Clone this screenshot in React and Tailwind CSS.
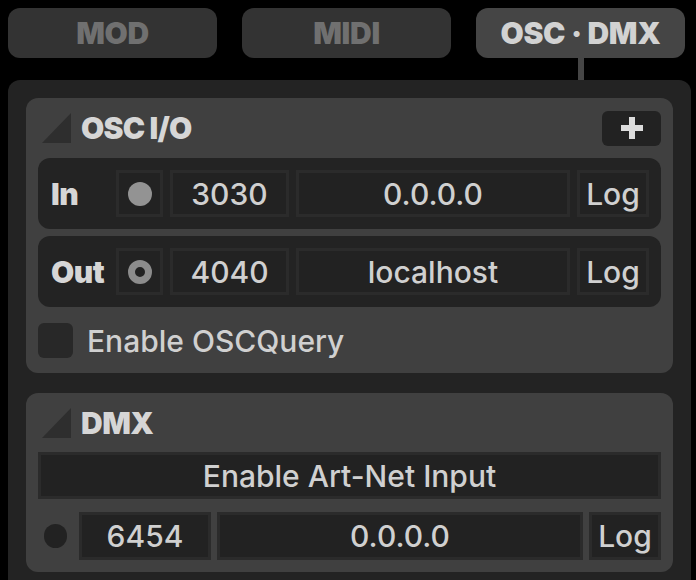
import React from "react";

const Tri = () => (
  <svg width="29" height="30" viewBox="0 0 29 30" className="shrink-0">
    <polygon points="29,0 29,30 0,30" fill="#2e2e2e" />
  </svg>
);

const Plus = () => (
  <svg width="22" height="22" viewBox="0 0 22 22">
    <rect x="8" y="0" width="6" height="22" fill="#dcdcdc" />
    <rect x="0" y="8" width="22" height="6" fill="#dcdcdc" />
  </svg>
);

const Box = ({ w, children, className = "" }) => (
  <div
    className={`h-full border-[3px] border-[#2b2b2b] bg-[#222222] flex items-center justify-center ${className}`}
    style={{ width: w }}
  >
    {children}
  </div>
);

const IoRow = ({ label, ring, port, ip }) => (
  <div className="h-[71px] rounded-[12px] bg-[#232323] flex items-center pl-[13px] pr-[11px] py-[12px]">
    <div className="w-[65px] font-black text-[#d6d6d6] tracking-[-0.5px]">{label}</div>
    <div className="flex h-[47px] gap-[7px] items-stretch">
      <Box w={47}>
        {ring ? (
          <div className="w-[24px] h-[24px] rounded-full border-[7px] border-[#8c8c8c]" />
        ) : (
          <div className="w-[24px] h-[24px] rounded-full bg-[#939393]" />
        )}
      </Box>
      <Box w={119}>{port}</Box>
      <Box w={274}>{ip}</Box>
      <Box w={72}>Log</Box>
    </div>
  </div>
);

const Tab = ({ label, active }) => (
  <div
    className={`w-[209px] h-[50px] rounded-[12px] flex items-center justify-center font-black tracking-[-0.3px] ${
      active ? "bg-[#454545] text-[#d2d2d2]" : "bg-[#333333] text-[#707070]"
    }`}
  >
    {label}
  </div>
);

export default function App() {
  return (
    <div
      className="w-[696px] h-[580px] overflow-hidden bg-black text-[30px] font-medium leading-none text-[#d0d0d0]"
      style={{ fontFamily: "Inter, 'Noto Sans', sans-serif" }}
    >
      <div className="flex gap-[25px] pl-[8px] pt-[8px]">
        <Tab label="MOD" />
        <Tab label="MIDI" />
        <Tab label="OSC · DMX" active />
      </div>
      <div className="h-[22px] pl-[578px]">
        <div className="w-[6px] h-full bg-[#454545]" />
      </div>
      <div className="ml-[8px] w-[683px] h-[520px] rounded-t-[12px] bg-[#232323] px-[18px] pt-[18px]">
        {/* OSC I/O */}
        <div className="rounded-[12px] bg-[#404040] px-[12px] pt-[12px] pb-[15px]">
          <div className="h-[36px] flex items-center pl-[4px]">
            <Tri />
            <div className="ml-[10px] font-black text-[#d6d6d6] tracking-[-0.8px]">OSC I/O</div>
            <div className="ml-auto w-[59px] h-[35px] rounded-[6px] bg-[#222222] flex items-center justify-center">
              <Plus />
            </div>
          </div>
          <div className="mt-[12px] flex flex-col gap-[7px]">
            <IoRow label="In" port="3030" ip="0.0.0.0" />
            <IoRow label="Out" ring port="4040" ip="localhost" />
          </div>
          <div className="mt-[16px] flex items-center">
            <div className="w-[35px] h-[35px] rounded-[6px] bg-[#282828]" />
            <div className="ml-[14px]">Enable OSCQuery</div>
          </div>
        </div>
        {/* DMX */}
        <div className="mt-[20px] rounded-[12px] bg-[#404040] px-[12px] pt-[12px] pb-[12px]">
          <div className="h-[36px] flex items-center pl-[4px]">
            <Tri />
            <div className="ml-[10px] font-black text-[#d6d6d6] tracking-[-0.5px]">DMX</div>
          </div>
          <div className="mt-[11px] h-[47px]">
            <Box w={623}>Enable Art-Net Input</Box>
          </div>
          <div className="mt-[13px] h-[48px] flex items-center">
            <div className="ml-[6px] w-[24px] h-[24px] rounded-full bg-[#222222]" />
            <div className="ml-[12px] flex h-full gap-[6px]">
              <Box w={132}>6454</Box>
              <Box w={366}>0.0.0.0</Box>
              <Box w={72}>Log</Box>
            </div>
          </div>
        </div>
      </div>
    </div>
  );
}
